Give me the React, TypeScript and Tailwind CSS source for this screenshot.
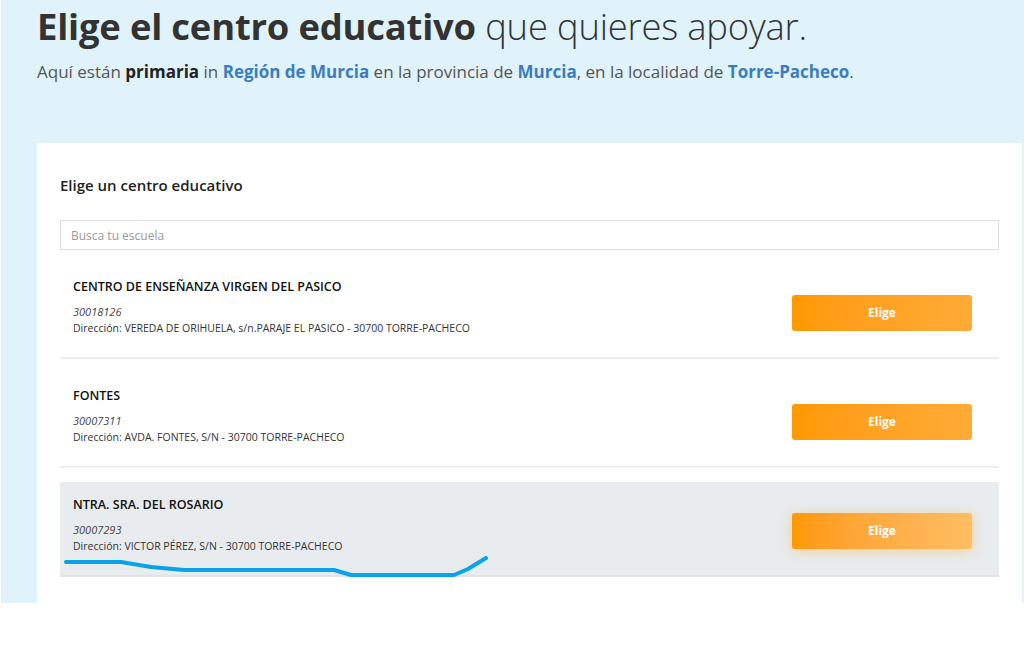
const schools = [
    {
        name: "CENTRO DE ENSEÑANZA VIRGEN DEL PASICO",
        code: "30018126",
        address: "Dirección: VEREDA DE ORIHUELA, s/n.PARAJE EL PASICO - 30700 TORRE-PACHECO",
    },
    {
        name: "FONTES",
        code: "30007311",
        address: "Dirección: AVDA. FONTES, S/N - 30700 TORRE-PACHECO",
    },
    {
        name: "NTRA. SRA. DEL ROSARIO",
        code: "30007293",
        address: "Dirección: VICTOR PÉREZ, S/N - 30700 TORRE-PACHECO",
        hover: true,
    },
];

function SchoolRow({ school }: { school: (typeof schools)[number] }) {
    return (
        <div
            className={`mt-[14px] h-[95px] flex items-center justify-between pl-[13px] pr-[27px] border-b-2 ${
                school.hover ? "bg-[#e8ecee] border-[#e0e4e6]" : "border-[#eeeeee]"
            }`}
        >
            <div className="flex flex-col self-start pt-[14px]">
                <h3 className="text-[12.5px] leading-[18px] font-semibold text-[#111]">{school.name}</h3>
                <p className="mt-[8px] text-[11px] leading-[16px] italic text-[#444]">{school.code}</p>
                <p className="text-[10.5px] leading-[16px] text-[#333]">{school.address}</p>
            </div>
            <button
                className={`w-[180px] h-[36px] mt-[4px] rounded-[3px] text-white text-[12px] font-bold ${
                    school.hover
                        ? "bg-gradient-to-r from-[#ff9900] to-[#ffbe63] shadow-[0_2px_12px_rgba(255,170,40,0.45)]"
                        : "bg-gradient-to-r from-[#ff9900] to-[#ffab36]"
                }`}
            >
                Elige
            </button>
        </div>
    );
}

export default function App() {
    return (
        <div className="min-h-[671px] bg-white pl-px font-['Open_Sans',sans-serif]">
            <div className="relative bg-[#e0f3fa] h-[603px] pl-[36px] pr-[2px] flex flex-col">
                <h1 className="mt-[3px] text-[36.4px] leading-[46px] text-[#333] tracking-[-0.2px]">
                    <span className="font-bold">Elige el centro educativo</span>{" "}
                    <span className="font-light">que quieres apoyar.</span>
                </h1>
                <p className="mt-[11px] text-[17px] leading-[24px] text-[#555]">
                    Aquí están <b className="text-[#222]">primaria</b> in{" "}
                    <b className="text-[#3b7dbe]">Región de Murcia</b> en la provincia de{" "}
                    <b className="text-[#3b7dbe]">Murcia</b>, en la localidad de{" "}
                    <b className="text-[#3b7dbe]">Torre-Pacheco</b>.
                </p>

                <div className="mt-[59px] flex-1 bg-white px-[23px] pt-[32px]">
                    <h2 className="text-[15px] leading-[20px] font-semibold text-[#222]">
                        Elige un centro educativo
                    </h2>
                    <input
                        type="text"
                        placeholder="Busca tu escuela"
                        className="mt-[25px] w-full h-[30px] border border-[#dddddd] px-[10px] text-[12px] placeholder:text-[#999] outline-none"
                    />
                    {schools.map((s) => (
                        <SchoolRow key={s.code} school={s} />
                    ))}
                </div>

                <svg
                    className="absolute left-0 top-0 pointer-events-none"
                    width="1024"
                    height="603"
                    viewBox="0 0 1024 603"
                >
                    <path
                        d="M65 562 L120 562 L150 567 L183 570 L333 570 L350 575 L453 575 L467 569 L485 558"
                        fill="none"
                        stroke="#0aa3ea"
                        strokeWidth="4"
                        strokeLinecap="round"
                        strokeLinejoin="round"
                    />
                </svg>
            </div>
        </div>
    );
}
